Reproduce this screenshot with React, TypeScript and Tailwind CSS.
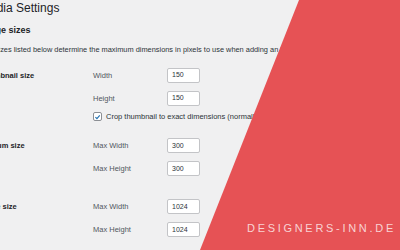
import React from 'react';

type Field = { label: string; value: string };

const sizes: { title: string; fields: Field[]; crop?: boolean; gap: string }[] = [
  {
    title: 'Thumbnail size',
    fields: [
      { label: 'Width', value: '150' },
      { label: 'Height', value: '150' },
    ],
    crop: true,
    gap: 'mt-[14px]',
  },
  {
    title: 'Medium size',
    fields: [
      { label: 'Max Width', value: '300' },
      { label: 'Max Height', value: '300' },
    ],
    gap: 'mt-[16px]',
  },
  {
    title: 'Large size',
    fields: [
      { label: 'Max Width', value: '1024' },
      { label: 'Max Height', value: '1024' },
    ],
    gap: 'mt-[23px]',
  },
];

const SizeBlock: React.FC<{ title: string; fields: Field[]; crop?: boolean; gap: string }> = ({
  title,
  fields,
  crop,
  gap,
}) => (
  <section className={`${gap} flex`}>
    <div className="flex h-[15px] w-[113px] shrink-0 items-center text-[7.5px] font-bold text-[#1d2327]">
      {title}
    </div>
    <div className="flex flex-col gap-[8px]">
      {fields.map((f) => (
        <div key={f.label} className="flex h-[15px] items-center">
          <span className="w-[74px] text-[7.5px] text-[#50575e]">{f.label}</span>
          <div className="flex h-[15px] w-[33px] items-center rounded-[2px] border border-[#c3c4c7] bg-white pl-[4px] text-[7px] text-[#2c3338]">
            {f.value}
          </div>
        </div>
      ))}
      {crop && (
        <div className="-mt-[3px] flex items-center gap-[4px] whitespace-nowrap text-[7.5px] text-[#2c3338]">
          <span className="flex h-[9px] w-[9px] items-center justify-center rounded-[2px] border border-[#8c8f94] bg-white">
            <svg viewBox="0 0 10 10" className="h-[8px] w-[8px]">
              <path d="M2 5.2 4.2 7.4 8.2 2.6" fill="none" stroke="#2271b1" strokeWidth="1.6" />
            </svg>
          </span>
          Crop thumbnail to exact dimensions (normally thumbnails are proportional)
        </div>
      )}
    </div>
  </section>
);

export default function App() {
  return (
    <div className="relative h-[250px] w-[400px] overflow-hidden bg-[#f0f0f1] font-['Liberation_Sans',Arial,sans-serif] text-[#2c3338]">
      <div className="-ml-[20px] flex flex-col">
        <h1 className="mt-[1px] text-[12px] leading-[14px] text-[#1d2327]">Media Settings</h1>
        <h2 className="mt-[10px] text-[9px] font-bold leading-[11px] text-[#1d2327]">Image sizes</h2>
        <p className="mt-[10px] whitespace-nowrap text-[7.4px] leading-[8px]">
          The sizes listed below determine the maximum dimensions in pixels to use when adding an image to the Media Library.
        </p>
        {sizes.map((s) => (
          <SizeBlock key={s.title} {...s} />
        ))}
      </div>

      <div className="absolute inset-0 bg-[#e65255] [clip-path:polygon(299px_0,400px_0,400px_250px,200px_250px)]" />
      <span className="absolute left-[247px] top-[223px] text-[11px] leading-none tracking-[2.7px] text-white/75">
        DESIGNERS-INN.DE
      </span>
    </div>
  );
}
